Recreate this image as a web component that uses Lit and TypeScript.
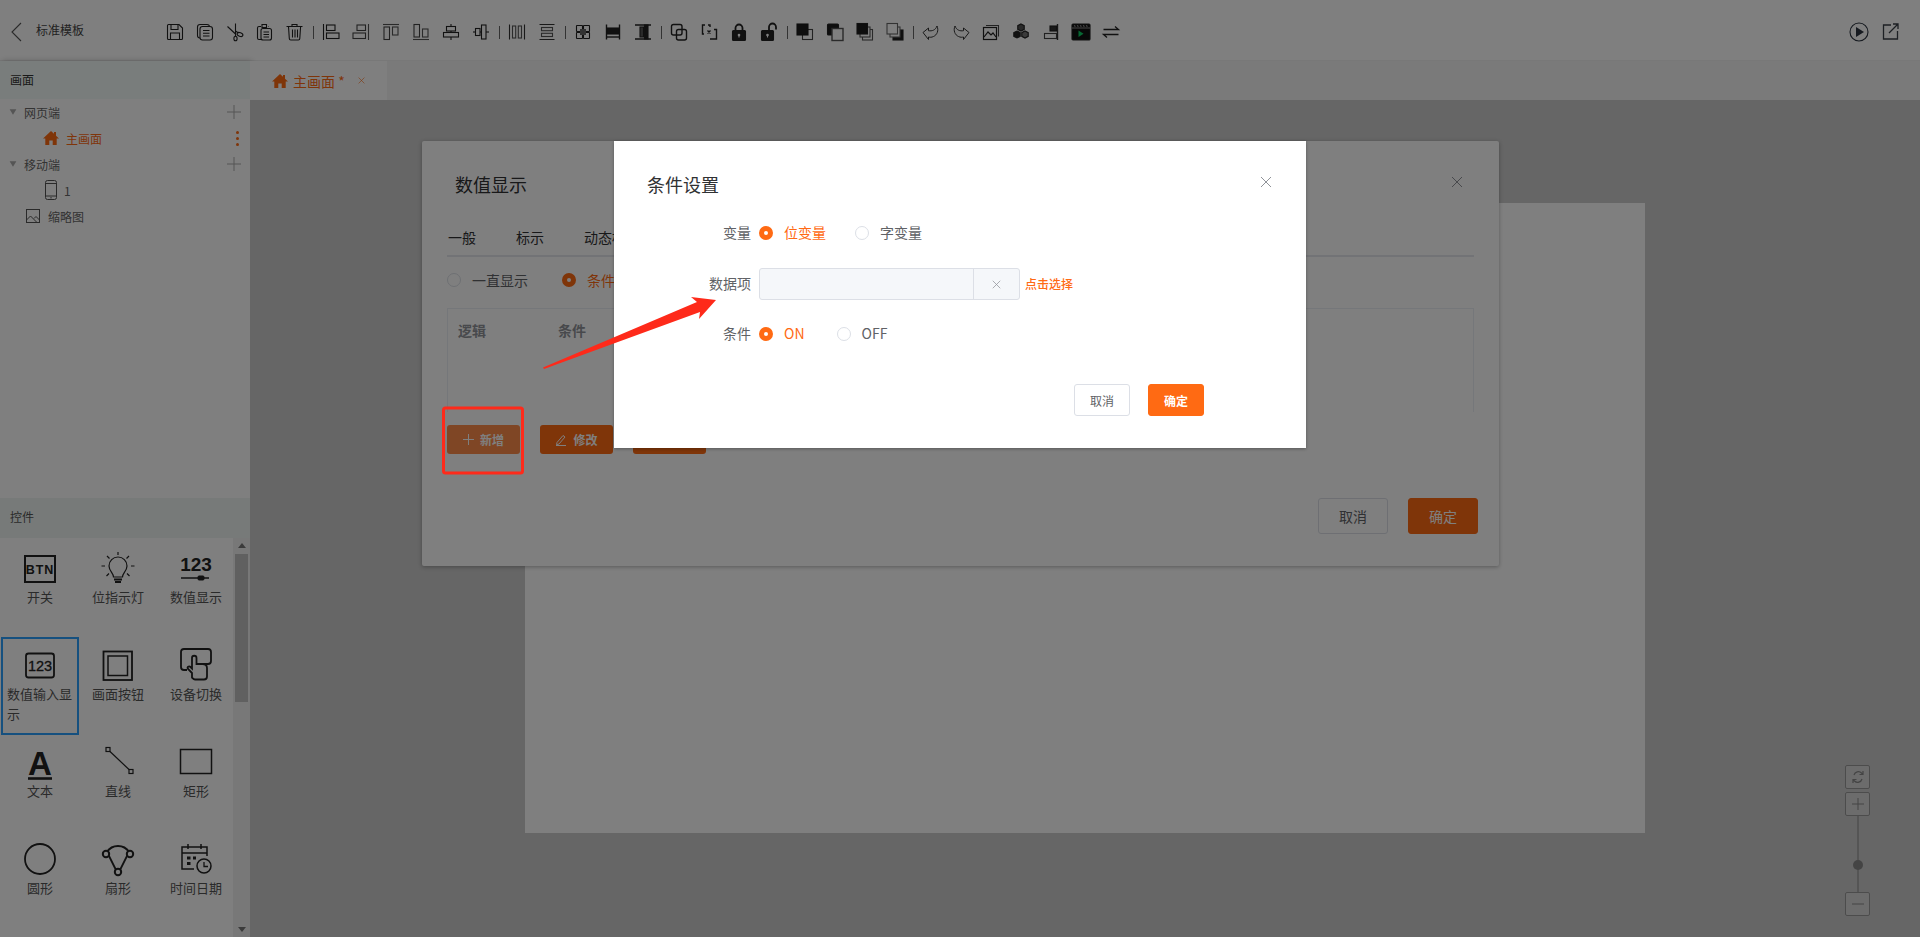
import { LitElement, css, html, svg, TemplateResult } from 'lit'
import { customElement } from 'lit/decorators.js'

const WHITE = '#fff'

// toolbar icons, all on a 20x20 box. null means a separator
const TOOLS: (TemplateResult | null)[] = [
  svg`<path d="M2.5 3.5a1 1 0 0 1 1-1h10.500l3.500 3.500v10.500a1 1 0 0 1-1 1h-13a1 1 0 0 1-1-1z"/><path d="M6 2.500v5h7v-5M5.500 17.500v-6.500h9v6.500"/>`,
  svg`<rect x="2.500" y="2.500" width="12" height="13.500" rx="2.500"/><rect x="5" y="4.500" width="12.500" height="13.500" rx="2.500" fill="${WHITE}"/><path d="M8 8.500h6.500M8 11.200h6.500M8 14h6.500"/>`,
  svg`<path d="M2.500 4.500l8 7.500M10.500 1.500v13"/><ellipse cx="15" cy="12.500" rx="3" ry="1.800" transform="rotate(20 15 12.500)"/><ellipse cx="10.500" cy="16.500" rx="1.600" ry="2.300"/><path d="M10.500 9l3 2" />`,
  svg`<path d="M6 4.500H4a1.500 1.500 0 0 0-1.500 1.500v10A1.500 1.500 0 0 0 4 17.500h2"/><path d="M14 4.500h-.500M7 2.500h4.500v3H7z"/><rect x="6" y="6.500" width="10.500" height="11.500" rx="2"/><path d="M8.500 10h5.500M8.500 12.500h5.500M8.500 15h5.500"/>`,
  svg`<path d="M1.500 4.500h16M7 4.500v-2h5v2M3.500 4.500l.8 12a1.500 1.500 0 0 0 1.500 1.500h7.500a1.500 1.500 0 0 0 1.500-1.500l.8-12M7.500 7.500v8M10 7.500v8M12.500 7.500v8"/>`,
  null,
  svg`<path d="M2.500 2v16"/><rect x="5.500" y="3" width="8.500" height="5.500"/><rect x="5.500" y="11" width="12.500" height="5.500"/>`,
  svg`<path d="M17.500 2v16" stroke="#555"/><rect x="6" y="3" width="8.500" height="5.500" stroke="#444"/><rect x="2" y="11" width="12.500" height="5.500" stroke="#444"/>`,
  svg`<path d="M2 2.500h16" stroke="#555"/><rect x="3" y="5" width="5.500" height="12.500" stroke="#444"/><rect x="11.500" y="5" width="5.500" height="8" stroke="#555"/>`,
  svg`<path d="M2 17.500h16" stroke="#555"/><rect x="3" y="2.500" width="5.500" height="12.500" stroke="#444"/><rect x="11.500" y="7" width="5.500" height="8" stroke="#555"/>`,
  svg`<path d="M10 2v16"/><rect x="5.500" y="4.500" width="9" height="4.500" fill="${WHITE}"/><rect x="2.500" y="10.500" width="15" height="4.500" fill="${WHITE}"/>`,
  svg`<path d="M2 10h16"/><rect x="4.500" y="6.500" width="4.500" height="7" fill="${WHITE}"/><rect x="10.500" y="3" width="4.500" height="14" fill="${WHITE}"/>`,
  null,
  svg`<path d="M2.500 2.500v15M17.500 2.500v15" stroke="#333"/><rect x="5.500" y="4" width="3.200" height="12" stroke="#555"/><rect x="11.300" y="4" width="3.200" height="12" stroke="#555"/>`,
  svg`<path d="M2.500 2.500h15M2.500 17.500h15" stroke="#333"/><rect x="4.500" y="5.500" width="11" height="3.200" stroke="#555"/><rect x="4.500" y="11.300" width="11" height="3.200" stroke="#555"/>`,
  null,
  svg`<rect x="3.500" y="3.500" width="6" height="6" rx=".5"/><rect x="10.500" y="3.500" width="6" height="6" rx=".5"/><rect x="3.500" y="10.500" width="6" height="6" rx=".5"/><rect x="10.500" y="10.500" width="6" height="6" rx=".5"/><rect x="7" y="7" width="6" height="6" fill="#666" stroke="none"/>`,
  svg`<path d="M3.500 2.500v15M16.500 2.500v15" stroke-width="1.400"/><rect x="4" y="6" width="12" height="6" fill="#222"/><path d="M4 15h12" stroke-width="1.400"/>`,
  svg`<path d="M2 3h16M2 17h16" stroke-width="1.400"/><rect x="7" y="5" width="3.500" height="10" fill="#555"/><rect x="11.500" y="3" width="3.500" height="14" fill="#222"/>`,
  null,
  svg`<rect x="2.500" y="2.500" width="10.500" height="10.500" rx="2" stroke-width="1.400"/><rect x="7.500" y="7.500" width="10" height="10.500" rx="2" stroke-width="1.400"/>`,
  svg`<path d="M6 3H3.500v9H5M9 3h2v2M11 17h6.500V7.500H15" stroke-width="1.400"/><path d="M8.500 8.500l3 3M11.500 8.500l-3 3" stroke-width="1.400"/>`,
  svg`<path d="M6.500 9V6a3.500 3.500 0 0 1 7 0v3" stroke-width="1.800"/><rect x="3.500" y="8.500" width="13" height="10" rx="1" fill="#222"/><circle cx="10" cy="13" r="1.300" fill="${WHITE}" stroke="none"/><path d="M10 13v2.500" stroke="${WHITE}"/>`,
  svg`<path d="M10 9V5a3.500 3.500 0 0 1 7 0v2.500" stroke-width="1.800"/><rect x="2.500" y="8.500" width="12" height="10" rx="1" fill="#222"/><circle cx="8.500" cy="13" r="1.300" fill="${WHITE}" stroke="none"/><path d="M8.500 13v2.500" stroke="${WHITE}"/>`,
  null,
  svg`<rect x="7.500" y="7.500" width="10" height="10" fill="${WHITE}" stroke="#444"/><rect x="2" y="2" width="11" height="11" fill="#1c1c1c" stroke="#1c1c1c"/>`,
  svg`<rect x="2.500" y="2" width="11" height="11" rx="1" fill="#1c1c1c"/><rect x="7" y="6.500" width="11" height="12" fill="${WHITE}" stroke="#555" stroke-width="1.400"/>`,
  svg`<rect x="7.500" y="7.500" width="10" height="10.500" stroke="#555"/><rect x="5" y="5" width="10" height="10" stroke="#555" fill="${WHITE}"/><rect x="2" y="1.500" width="10.500" height="10.500" fill="#1c1c1c"/>`,
  svg`<rect x="8" y="8" width="10" height="10" fill="#1c1c1c"/><rect x="5" y="5" width="10" height="10" stroke="#666" fill="${WHITE}"/><rect x="2" y="1.500" width="10.500" height="10.500" stroke="#666" fill="${WHITE}"/>`,
  null,
  svg`<path d="M2 10.500L7.500 6v2.700c3.500.6 7-.5 8.500-4.700 2 4.500 0 9-3.500 10.500-2 1-3.500.8-5 .5v2.500z" stroke="#333" stroke-width="1"/>`,
  svg`<path d="M18 10.500L12.500 6v2.700c-3.500.6-7-.5-8.500-4.700-2 4.500 0 9 3.500 10.500 2 1 3.500.8 5 .5v2.500z" stroke="#333" stroke-width="1"/>`,
  svg`<rect x="2.500" y="5.500" width="13" height="12" stroke-width="1.200"/><path d="M5 3.500h12.500v11" stroke="#444"/><path d="M3 15l4-5 3 3 2-2 3 4" stroke-width="1.200"/>`,
  svg`<path d="M10 2l3.200 1.700v3.600L10 9 6.800 7.300V3.700z" stroke-width="1.200" fill="#555"/><path d="M6 9l3.200 1.700v3.600L6 16l-3.200-1.700v-3.600z" fill="#222"/><path d="M14 9l3.200 1.700v3.600L14 16l-3.200-1.700v-3.600z" stroke-width="1.200" fill="#777"/>`,
  svg`<path d="M16.500 2v16" stroke="#333" stroke-width="1.400"/><rect x="9" y="4" width="6.500" height="5" fill="#333"/><rect x="3.500" y="11.500" width="12" height="5" stroke="#444"/>`,
  svg`<rect x="1" y="2" width="18" height="16" rx="1" fill="#111"/><path d="M3 3.500l1.500 1M6 3.500l1.500 1M9 3.500l1.500 1M12 3.500l1.500 1M15 3.500l1.500 1" stroke="#999"/><path d="M1 6h18" stroke="#888"/><path d="M7.500 8.500l5 3.200-5 3.200z" fill="#0fd066" stroke="none"/>`,
  svg`<path d="M2.500 7.500h15l-3.500-3M17.500 12.500h-15l3.500 3" stroke-width="1.300"/>`,
]

type Widget = { label: string; icon: TemplateResult; active?: boolean }

const WIDGETS: Widget[] = [
  {
    label: '开关',
    icon: svg`<rect x="3" y="5" width="30" height="26" stroke-width="2"/><text x="18" y="23" class="t" font-size="12.500" text-anchor="middle" letter-spacing="1">BTN</text>`,
  },
  {
    label: '位指示灯',
    icon: svg`<path d="M13.500 26c0-4-4.500-6-4.500-11a9 9 0 0 1 18 0c0 5-4.500 7-4.500 11z" stroke-width="1.200"/><path d="M14 28.500h8M15 31h6" stroke-width="1.800"/><path d="M18 1v3M5 15H1.500M31 15h3.500M7 5l2.500 2.500M29 5l-2.500 2.500M6.500 25l2.500-2.500M29.500 25L27 22.500" stroke-width="1.200"/>`,
  },
  {
    label: '数值显示',
    icon: svg`<text x="18" y="20" class="t" font-size="19" text-anchor="middle">123</text><path d="M3 27h28" stroke-width="1.500"/><rect x="20" y="25" width="6" height="4" fill="#222" rx="1"/>`,
  },
  {
    label: '数值输入显示',
    active: true,
    icon: svg`<rect x="4" y="5.500" width="28" height="24" rx="2.500" stroke-width="1.800"/><text x="18" y="23" class="n" font-size="14.500" text-anchor="middle">123</text>`,
  },
  {
    label: '画面按钮',
    icon: svg`<rect x="3.500" y="3.500" width="28.500" height="28.500" stroke-width="1.800"/><rect x="8" y="8" width="19.500" height="19.500" stroke-width="1.500"/>`,
  },
  {
    label: '设备切换',
    icon: svg`<path d="M9 22H6a3 3 0 0 1-3-3V4a3 3 0 0 1 3-3h24a3 3 0 0 1 3 3v9a3 3 0 0 1-3 3h-5" stroke-width="1.800"/><path d="M14 25l-4-4c-1.500-2 1-3.500 2.500-2l1.500 1.500V10a2.200 2.200 0 0 1 4.500 0v6h6c3 0 4.500 2 4.500 4v8.500a3 3 0 0 1-3 3H17c-1.500 0-2-1-3-2z" stroke-width="1.800"/>`,
  },
  {
    label: '文本',
    icon: svg`<text x="18" y="30" class="t" font-size="33" text-anchor="middle">A</text><path d="M6 33.500h24" stroke-width="2.600"/>`,
  },
  {
    label: '直线',
    icon: svg`<rect x="6" y="2.500" width="4" height="4" stroke-width="1.200"/><rect x="29" y="24.500" width="4" height="4" stroke-width="1.200"/><path d="M10 6.500L29 24.500" stroke-width="1.200"/>`,
  },
  {
    label: '矩形',
    icon: svg`<rect x="2.500" y="4.500" width="31" height="24" stroke-width="1.500"/>`,
  },
  {
    label: '圆形',
    icon: svg`<circle cx="18" cy="17" r="15" stroke-width="1.800"/>`,
  },
  {
    label: '扇形',
    icon: svg`<path d="M7 10C12 2 24 2 29 10L20 28h-4z" stroke-width="1.800"/><circle cx="6" cy="12" r="3.200" stroke-width="2" fill="${WHITE}"/><circle cx="30" cy="12" r="3.200" stroke-width="2" fill="${WHITE}"/><circle cx="18" cy="30" r="3.200" stroke-width="2" fill="${WHITE}"/>`,
  },
  {
    label: '时间日期',
    icon: svg`<path d="M16 27H4V5h25v9" stroke-width="1.500"/><path d="M4 11h25M10 2v5M23 2v5" stroke-width="1.500"/><path d="M9 14.500h3.500v3H9zM15 14.500h3v3h-3zM9 20h3.500v3H9z" fill="#222" stroke="none"/><circle cx="26" cy="24" r="7" stroke-width="1.500" fill="${WHITE}"/><path d="M26 20v4.500h4" stroke-width="1.300"/>`,
  },
]

const ARROW = svg`<path d="M3 1.500L17 10 3 18.500z"/>`
const HOME = svg`<path d="M8 1L0 8.500h2.300V15h4v-4.500h3.400V15h4V8.500H16L13 5.700V2h-2v1.800z" fill="currentColor"/>`

@customElement('app-root')
export class AppRoot extends LitElement {
  static styles = css`
    :host {
      display: block;
      width: 100%;
      height: 100vh;
      overflow: hidden;
      position: relative;
      font-family: 'Noto Sans CJK SC', 'Noto Sans', sans-serif;
      font-size: 12px;
      color: #333;
      background: #fff;
    }
    svg {
      display: block;
      flex: none;
    }
    .app {
      display: flex;
      flex-direction: column;
      height: 100%;
    }

    /* top bar */
    .top {
      flex: none;
      height: 61px;
      display: flex;
      align-items: center;
      background: #fff;
      border-bottom: 1px solid #f0f0f0;
      box-sizing: border-box;
      padding-top: 3px;
    }
    .back {
      width: 36px;
      padding-left: 11px;
      box-sizing: border-box;
    }
    .top-title {
      width: 124px;
      line-height: 20px;
      margin-top: -3px;
      color: #444;
    }
    .tool {
      width: 30px;
      display: flex;
      justify-content: center;
    }
    .tool svg {
      fill: none;
      stroke: #222;
      stroke-width: 1.100;
    }
    .sep {
      width: 6px;
      height: 13px;
      margin-top: 2px;
      box-sizing: border-box;
      border-left: 1px solid #666;
      margin-left: 3px;
      margin-right: -3px;
    }
    .top-right {
      margin-left: auto;
      display: flex;
      gap: 13px;
      padding-right: 21px;
      align-items: center;
    }

    .body {
      flex: 1;
      display: flex;
      min-height: 0;
    }

    /* left panel */
    .left {
      flex: none;
      width: 250px;
      display: flex;
      flex-direction: column;
      background: #fff;
      box-shadow: 2px 0 6px rgba(0, 0, 0, 0.25);
      position: relative;
    }
    .panel-title {
      flex: none;
      height: 38px;
      line-height: 38px;
      padding-left: 10px;
      background: #f3fbf8;
      color: #333;
    }
    .panel-title.second {
      height: 40px;
      line-height: 38px;
      background: #eef5f2;
      color: #555;
    }
    .tree {
      flex: 1;
    }
    .tree-row {
      height: 26px;
      display: flex;
      align-items: center;
      color: #666;
    }
    .tree-row .caret {
      width: 8px;
      height: 8px;
      margin: 0 7px 0 9px;
      fill: #aaa;
      transform: rotate(90deg);
    }
    .tree-row .plus {
      margin-left: auto;
      margin-right: 9px;
      stroke: #aaa;
    }
    .tree-row.page {
      padding-left: 43px;
      color: #ff6a13;
    }
    .tree-row.page svg:first-child {
      margin-right: 7px;
    }
    .dots {
      margin-left: auto;
      margin-right: 11px;
      display: flex;
      flex-direction: column;
      gap: 3px;
    }
    .dots i {
      width: 3px;
      height: 3px;
      border-radius: 50%;
      background: #ff6a13;
    }
    .tree-row.mobile {
      padding-left: 45px;
      gap: 7px;
      color: #666;
    }
    .tree-row.thumb {
      padding-left: 26px;
      gap: 8px;
    }

    .widgets {
      flex: none;
      height: 399px;
      display: flex;
      background: #fff;
    }
    .grid {
      flex: none;
      width: 233px;
      box-sizing: border-box;
      display: grid;
      grid-template-columns: repeat(3, 78px);
      grid-auto-rows: 97px;
      padding: 2px 0 0 1px;
      align-content: start;
    }
    .cell {
      box-sizing: border-box;
      height: 98px;
      border: 2.500px solid transparent;
      padding: 8.500px 4px 0;
      display: flex;
      flex-direction: column;
      align-items: center;
    }
    .cell.active {
      border-color: #2aa0ff;
    }
    .cell svg {
      fill: none;
      stroke: #222;
    }
    .cell svg .t {
      font-family: 'Liberation Sans', sans-serif;
      font-weight: 700;
      fill: #222;
      stroke: none;
    }
    .cell svg .n {
      font-family: 'Liberation Sans', sans-serif;
      fill: #222;
      stroke: #222;
      stroke-width: 0.300;
    }
    .cell span {
      font-size: 13px;
      line-height: 20px;
      color: #555;
      word-break: break-all;
    }
    .scroll {
      flex: none;
      width: 17px;
      display: flex;
      flex-direction: column;
      align-items: center;
      background: #f1f1f1;
    }
    .scroll svg {
      fill: #777;
      margin: 5px 0;
    }
    .scroll .down {
      transform: rotate(180deg);
      margin-top: auto;
    }
    .thumb-bar {
      margin-top: 1px;
      width: 13px;
      height: 148px;
      background: #c1c1c1;
    }

    /* workspace */
    .main {
      flex: 1;
      min-width: 0;
      display: flex;
      flex-direction: column;
      position: relative;
      background: #ccc;
    }
    .tabs {
      flex: none;
      height: 39px;
      background: #f5f5f5;
      display: flex;
    }
    .tab {
      width: 137px;
      box-sizing: border-box;
      padding-left: 22px;
      display: flex;
      align-items: center;
      background: #fff;
      color: #ff6a13;
      font-size: 14px;
    }
    .tab b {
      font-weight: 400;
      margin-left: 5px;
      white-space: pre;
    }
    .tab .x {
      margin-left: 13px;
      stroke: #ff6a13;
    }
    .stage {
      flex: 1;
      padding: 103px 0 0 275px;
    }
    .sheet {
      width: 1120px;
      height: 630px;
      background: #fff;
    }
    .zoom {
      position: absolute;
      left: 1595px;
      top: 704px;
      width: 25px;
      display: flex;
      flex-direction: column;
      align-items: center;
    }
    .zoom-btn {
      box-sizing: border-box;
      width: 25px;
      height: 24px;
      border: 1px solid #999;
      border-radius: 2px;
      background: #d8d8d8;
      display: flex;
      align-items: center;
      justify-content: center;
      margin-bottom: 3px;
    }
    .zoom-btn svg {
      fill: none;
      stroke: #888;
    }
    .zoom-track {
      width: 2px;
      height: 76px;
      margin-top: -3px;
      background: #aaa;
      display: flex;
      justify-content: center;
      padding-top: 44px;
      box-sizing: border-box;
    }
    .zoom-track i {
      flex: none;
      width: 10px;
      height: 10px;
      border-radius: 50%;
      background: #888;
    }

    /* dialogs */
    .dialog {
      position: absolute;
      top: 141px;
      box-sizing: border-box;
      background: #fff;
      display: flex;
      flex-direction: column;
      border-radius: 2px;
    }
    .dialog.under {
      left: 422px;
      width: 1077px;
      height: 425px;
      padding: 0 25px 0 25px;
      box-shadow: 0 1px 4px rgba(0, 0, 0, 0.3);
    }
    .dialog.over {
      left: 614px;
      width: 692px;
      height: 307px;
      border-radius: 0;
      box-shadow: 0 1px 3px rgba(0, 0, 0, 0.3);
      z-index: 11;
    }
    .dlg-head {
      flex: none;
      height: 81px;
      display: flex;
      justify-content: space-between;
      padding-top: 29px;
      box-sizing: border-box;
      font-size: 18px;
      line-height: 28px;
      color: #303133;
    }
    .under .dlg-head {
      padding-left: 8px;
      padding-right: 11px;
    }
    .over .dlg-head {
      height: 76px;
      padding-left: 33px;
      padding-right: 34px;
    }
    .dlg-head svg {
      margin-top: 6px;
      stroke: #909399;
    }
    .tabbar {
      flex: none;
      height: 35px;
      box-sizing: border-box;
      border-bottom: 2px solid #e4e7ed;
      display: flex;
      gap: 40px;
      font-size: 14px;
      line-height: 30px;
      color: #303133;
      padding-left: 1px;
    }
    .radio-line {
      flex: none;
      height: 46px;
      margin-bottom: 5px;
      display: flex;
      align-items: center;
      font-size: 14px;
      gap: 34px;
    }
    .radio {
      display: flex;
      align-items: center;
      gap: 11px;
      font-size: 14px;
      line-height: 20px;
      color: #606266;
    }
    .radio i {
      flex: none;
      box-sizing: border-box;
      width: 14px;
      height: 14px;
      border-radius: 50%;
      border: 1px solid #dcdfe6;
      background: #fff;
    }
    .radio.on {
      color: #ff6a13;
    }
    .radio.on i {
      border: 5px solid #ff6a13;
    }
    .table {
      flex: none;
      height: 104px;
      box-sizing: border-box;
      border: 1px solid #ebeef5;
      border-bottom: none;
      display: flex;
      font-size: 14px;
      font-weight: 700;
      line-height: 42px;
      color: #909399;
    }
    .table span {
      width: 100px;
      padding-left: 10px;
      box-sizing: border-box;
    }
    .actions {
      flex: none;
      margin-top: 13px;
      display: flex;
      gap: 20px;
    }
    .act {
      width: 73px;
      height: 29px;
      border-radius: 3px;
      background: #ff6a13;
      color: #fff;
      font-size: 12px;
      font-weight: 700;
      display: flex;
      align-items: center;
      justify-content: center;
      gap: 6px;
    }
    .act.hover {
      background: #ff8c4a;
    }
    .act svg {
      stroke: #fff;
      fill: none;
    }
    .dlg-foot {
      flex: none;
      margin-top: 44px;
      margin-right: -4px;
      display: flex;
      justify-content: flex-end;
      gap: 20px;
    }
    .btn {
      box-sizing: border-box;
      display: flex;
      align-items: center;
      justify-content: center;
      border: 1px solid #dcdfe6;
      border-radius: 3px;
      background: #fff;
      color: #606266;
    }
    .btn.primary {
      border-color: #ff6a13;
      background: #ff6a13;
      color: #fff;
    }
    .under .btn {
      width: 70px;
      height: 36px;
      font-size: 14px;
    }
    .mask {
      position: absolute;
      inset: 0;
      background: rgba(0, 0, 0, 0.5);
      z-index: 10;
    }

    .form-row {
      flex: none;
      height: 32px;
      display: flex;
      align-items: center;
      font-size: 14px;
    }
    .form-row + .form-row {
      margin-top: 18px;
    }
    .form-row.data {
      margin-top: 19px;
    }
    .form-row label {
      flex: none;
      width: 137px;
      margin-right: 8px;
      line-height: 20px;
      margin-bottom: 3px;
      text-align: right;
      color: #606266;
    }
    .form-row .radio span {
      margin-bottom: 2px;
    }
    .form-row .radio + .radio {
      margin-left: 29px;
    }
    .form-row .radio.tight + .radio {
      margin-left: 32px;
    }
    .picker {
      flex: none;
      width: 261px;
      height: 32px;
      box-sizing: border-box;
      border: 1px solid #dcdfe6;
      border-radius: 3px;
      background: #f5f7fa;
      display: flex;
    }
    .picker div {
      margin-left: auto;
      width: 46px;
      box-sizing: border-box;
      border-left: 1px solid #dcdfe6;
      display: flex;
      align-items: center;
      justify-content: center;
    }
    .picker svg {
      stroke: #909399;
    }
    .pick-link {
      margin-left: 5px;
      margin-bottom: 2px;
      font-size: 12px;
      font-weight: 500;
      color: #ff6a13;
    }
    .over .dlg-foot {
      margin-top: 34px;
      margin-right: 0;
      padding-right: 102px;
      gap: 18px;
    }
    .over .btn {
      width: 56px;
      height: 32px;
      font-size: 12px;
    }
    .over .btn.primary {
      font-weight: 700;
    }

    /* hand drawn marks on top of the screenshot */
    .marks {
      position: absolute;
      inset: 0;
      pointer-events: none;
      z-index: 12;
    }
  `

  private cross(size: number) {
    return html`<svg width=${size} height=${size} viewBox="0 0 12 12" fill="none" stroke-width="1">
      <path d="M1 1l10 10M11 1L1 11" />
    </svg>`
  }

  private plus(cls = '') {
    return html`<svg class=${cls} width="14" height="14" viewBox="0 0 14 14" fill="none" stroke-width="1">
      <path d="M7 0v14M0 7h14" />
    </svg>`
  }

  private plusSmall() {
    return html`<svg width="11" height="11" viewBox="0 0 11 11" stroke-width="1"><path d="M5.500 0v11M0 5.500h11" /></svg>`
  }

  private renderTop() {
    return html`
      <div class="top">
        <div class="back">
          <svg width="11" height="20" viewBox="0 0 11 20" fill="none" stroke="#555" stroke-width="1.100">
            <path d="M10 1L1 10l9 9" />
          </svg>
        </div>
        <div class="top-title">标准模板</div>
        ${TOOLS.map((t) =>
          t
            ? html`<div class="tool"><svg width="20" height="20" viewBox="0 0 20 20">${t}</svg></div>`
            : html`<div class="sep"></div>`
        )}
        <div class="top-right">
          <svg width="20" height="20" viewBox="0 0 20 20">
            <circle cx="10" cy="10" r="9" fill="none" stroke="#2c3440" stroke-width="1.100" />
            <path d="M7 5l8 5-8 5z" fill="#2c3440" />
          </svg>
          <svg width="17" height="17" viewBox="0 0 17 17" fill="none" stroke="#3a4048" stroke-width="1.300">
            <path d="M9 2H1.500v14h14V8M7 10l9-9M11 1h5v5" />
          </svg>
        </div>
      </div>
    `
  }

  private renderLeft() {
    return html`
      <div class="left">
        <div class="panel-title">画面</div>
        <div class="tree">
          <div class="tree-row">
            <svg class="caret" viewBox="0 0 20 20">${ARROW}</svg>网页端${this.plus('plus')}
          </div>
          <div class="tree-row page">
            <svg width="16" height="16" viewBox="0 0 16 16">${HOME}</svg>主画面
            <div class="dots"><i></i><i></i><i></i></div>
          </div>
          <div class="tree-row">
            <svg class="caret" viewBox="0 0 20 20">${ARROW}</svg>移动端${this.plus('plus')}
          </div>
          <div class="tree-row mobile">
            <svg width="12" height="20" viewBox="0 0 12 20" fill="none" stroke="#555">
              <rect x=".5" y=".5" width="11" height="19" rx="2" />
              <path d="M.5 3.500h11M.5 16h11M6 17v1.500" />
            </svg>
            1
          </div>
          <div class="tree-row thumb">
            <svg width="14" height="14" viewBox="0 0 14 14" fill="none" stroke="#555">
              <rect x=".5" y=".5" width="13" height="13" />
              <path d="M.5 11l4-4 6 6M8 9.500l2-2 3.500 3.500" />
            </svg>
            缩略图
          </div>
        </div>
        <div class="panel-title second">控件</div>
        <div class="widgets">
          <div class="grid">
            ${WIDGETS.map(
              (w) => html`
                <div class="cell ${w.active ? 'active' : ''}">
                  <svg width="36" height="36" viewBox="0 0 36 36">${w.icon}</svg>
                  <span>${w.label}</span>
                </div>
              `
            )}
          </div>
          <div class="scroll">
            <svg width="8" height="5" viewBox="0 0 8 5"><path d="M4 0l4 5H0z" /></svg>
            <div class="thumb-bar"></div>
            <svg class="down" width="8" height="5" viewBox="0 0 8 5"><path d="M4 0l4 5H0z" /></svg>
          </div>
        </div>
      </div>
    `
  }

  private renderMain() {
    return html`
      <div class="main">
        <div class="tabs">
          <div class="tab">
            <svg width="16" height="16" viewBox="0 0 16 16">${HOME}</svg>
            <b>主画面 *</b>
            <span class="x">${this.cross(7)}</span>
          </div>
        </div>
        <div class="stage"><div class="sheet"></div></div>
        <div class="zoom">
          <div class="zoom-btn">
            <svg width="12" height="14" viewBox="0 0 12 14" stroke-width="1.200">
              <path d="M2 5a4.500 4.500 0 0 1 7.500-2L11 4.500M10 9a4.500 4.500 0 0 1-7.500 2L1 9.500M11 1v3.500H7.500M1 13V9.500h3.500" />
            </svg>
          </div>
          <div class="zoom-btn">
            <svg width="12" height="12" viewBox="0 0 12 12"><path d="M6 0v12M0 6h12" /></svg>
          </div>
          <div class="zoom-track"><i></i></div>
          <div class="zoom-btn">
            <svg width="12" height="12" viewBox="0 0 12 12"><path d="M0 6h12" /></svg>
          </div>
        </div>
      </div>
    `
  }

  private renderUnder() {
    return html`
      <div class="dialog under">
        <div class="dlg-head">
          <span>数值显示</span>
          ${this.cross(12)}
        </div>
        <div class="tabbar">
          <span>一般</span><span>标示</span><span>动态标示</span>
        </div>
        <div class="radio-line">
          <div class="radio"><i></i>一直显示</div>
          <div class="radio on"><i></i>条件显示</div>
        </div>
        <div class="table"><span>逻辑</span><span>条件</span></div>
        <div class="actions">
          <div class="act hover">${this.plusSmall()}新增</div>
          <div class="act">
            <svg width="12" height="12" viewBox="0 0 12 12" stroke-width="1">
              <path d="M2 8.500L8 1.500l2 1.500-6 7-2.500.7zM1 11.500h10" />
            </svg>
            修改
          </div>
          <div class="act">删除</div>
        </div>
        <div class="dlg-foot">
          <div class="btn">取消</div>
          <div class="btn primary">确定</div>
        </div>
      </div>
    `
  }

  private renderOver() {
    return html`
      <div class="dialog over">
        <div class="dlg-head">
          <span>条件设置</span>
          ${this.cross(12)}
        </div>
        <div class="form-row">
          <label>变量</label>
          <div class="radio on"><i></i><span>位变量</span></div>
          <div class="radio"><i></i><span>字变量</span></div>
        </div>
        <div class="form-row data">
          <label>数据项</label>
          <div class="picker"><div>${this.cross(9)}</div></div>
          <span class="pick-link">点击选择</span>
        </div>
        <div class="form-row">
          <label>条件</label>
          <div class="radio on tight"><i></i><span>ON</span></div>
          <div class="radio"><i></i><span>OFF</span></div>
        </div>
        <div class="dlg-foot">
          <div class="btn">取消</div>
          <div class="btn primary">确定</div>
        </div>
      </div>
    `
  }

  render() {
    return html`
      <div class="app">
        ${this.renderTop()}
        <div class="body">${this.renderLeft()} ${this.renderMain()}</div>
      </div>
      ${this.renderUnder()}
      <div class="mask"></div>
      ${this.renderOver()}
      <svg class="marks" width="1920" height="937" viewBox="0 0 1920 937">
        <rect x="443.500" y="408" width="79" height="65" rx="2" fill="none" stroke="#fe2a1a" stroke-width="3" />
        <path d="M543 367.500L697 302 691 297 716 300 699 319 700 312 544 369z" fill="#fe2a1a" />
      </svg>
    `
  }
}

declare global {
  interface HTMLElementTagNameMap {
    'app-root': AppRoot
  }
}
